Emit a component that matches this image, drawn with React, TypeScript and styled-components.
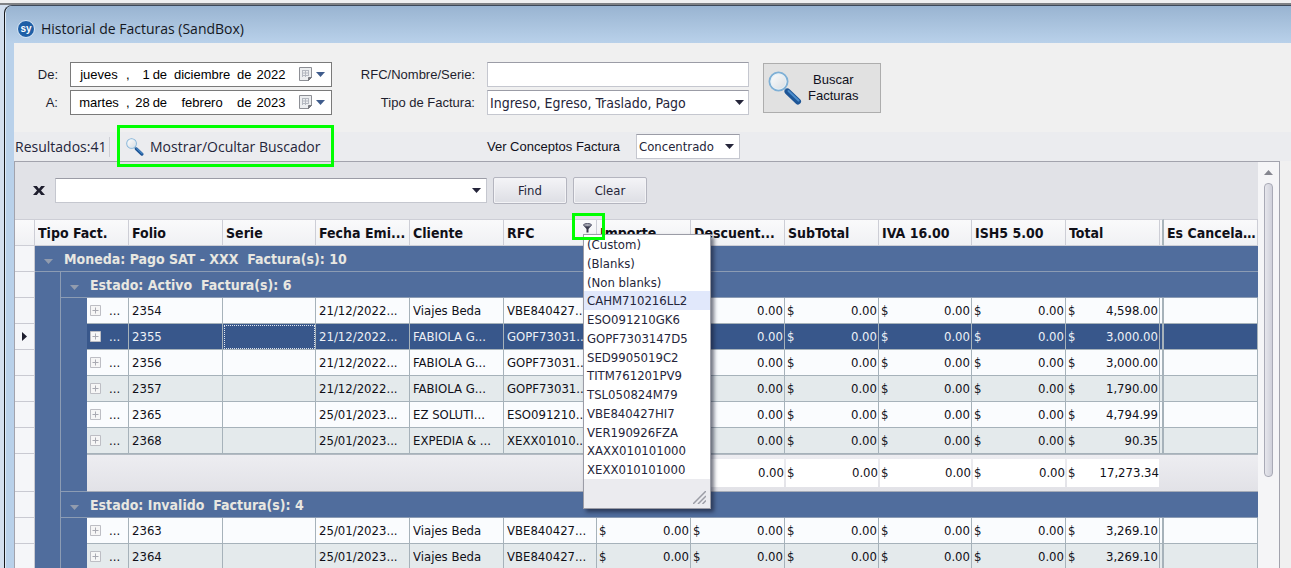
import React from "react";
import styled, { createGlobalStyle, css } from "styled-components";

const tahoma = `"DejaVu Sans Condensed", "DejaVu Sans", Tahoma, sans-serif`;
const segoe = `"Open Sans", "Noto Sans", sans-serif`;
const sans = `"Liberation Sans", Arial, sans-serif`;

const GlobalStyle = createGlobalStyle`
  *, *::before, *::after { box-sizing: border-box; }
  body { margin: 0; background: #f0f0f0; overflow: hidden; }
  button, input, select { font: inherit; color: inherit; margin: 0; }
`;

const Desktop = styled.div`
  height: 100vh;
  overflow: hidden;
  display: flex;
  flex-direction: column;
  padding-left: 4px;
  background: #d3dfee;
  color: #1e1e2e;
  font-family: ${tahoma};
  font-size: 13px;
  line-height: 16px;
`;

const TopEdge = styled.div`
  flex: none;
  height: 5px;
  margin-left: -4px;
  background: #f0f0f0;
  border-bottom: 2px solid #7f8184;
`;

const Window = styled.main`
  flex: 1;
  min-height: 0;
  display: flex;
  flex-direction: column;
  padding-left: 9px;
  border-left: 1px solid #16181c;
  border-top: 1px solid #3c4858;
  border-top-left-radius: 8px;
  background: #b9d1ea;
  box-shadow: inset 1px 0 0 #dfeaf6;
`;

const TitleBar = styled.header`
  flex: none;
  display: flex;
  align-items: center;
  gap: 6px;
  height: 37px;
  margin-left: -8px;
  padding: 8px 0 0 11px;
  border-top-left-radius: 6px;
  background: linear-gradient(#99b4d1, #b9d1ea);
`;

const Title = styled.h1`
  margin: 0;
  font: 400 14px/20px ${segoe};
  color: #14181f;
`;

const Form = styled.form`
  flex: none;
  display: flex;
  align-items: flex-start;
  height: 89px;
  padding: 19px 0 0 14px;
  background: #f0f0f0;
  font-family: ${sans};
`;

const Fields = styled.div<{ $label: number }>`
  display: grid;
  grid-template-columns: ${(p) => p.$label}px 262px;
  grid-auto-rows: 25px;
  gap: 3px 12px;
  align-items: center;
  margin-right: 13px;
`;

const FieldLabel = styled.label`
  text-align: right;
`;

const DateBox = styled.div`
  display: flex;
  align-items: center;
  height: 25px;
  padding: 0 6px 0 4px;
  border: 1px solid #7a7a7a;
  background: #fff;
  color: #000;
`;

const DatePart = styled.input<{ $w: number; $align?: string }>`
  width: ${(p) => p.$w}px;
  padding: 0;
  border: 0;
  outline: 0;
  background: none;
  text-align: ${(p) => p.$align ?? "center"};
`;

const DateWord = styled.span`
  padding: 0 3px;
`;

const PlainButton = styled.button`
  display: flex;
  align-items: center;
  gap: 3px;
  margin-left: auto;
  padding: 0;
  border: 0;
  background: none;
`;

const boxed = css`
  border: 1px solid #c5c7cf;
  border-top-color: #9b9ca6;
  border-radius: 0;
  background: #fff;
  outline: 0;
`;

const TextBox = styled.input`
  ${boxed}
  width: 100%;
  height: 25px;
  padding: 0 4px;
`;

const SelectWrap = styled.span<{ $w?: number; $right: number; $large?: boolean }>`
  position: relative;
  display: block;
  flex: none;
  width: ${(p) => (p.$w ? `${p.$w}px` : "100%")};
  font-family: ${tahoma};
  font-size: ${(p) => (p.$large ? 14 : 13)}px;

  svg {
    position: absolute;
    top: 10px;
    right: ${(p) => p.$right}px;
    pointer-events: none;
  }
`;

const Select = styled.select`
  ${boxed}
  appearance: none;
  width: 100%;
  height: 25px;
  padding: 0 2px;
  color: #25253a;
`;

const SearchButton = styled.button`
  display: flex;
  align-items: center;
  gap: 6px;
  width: 118px;
  height: 50px;
  margin: 1px 0 0 1px;
  padding: 0 4px;
  border: 1px solid #adadad;
  background: #e1e1e1;
  color: #101020;
  line-height: 16px;
`;

const Toolbar = styled.div`
  flex: none;
  display: flex;
  align-items: center;
  height: 29px;
  background: #ebecef;
  color: #25253a;
`;

const ToolText = styled.span`
  width: 96px;
  padding-left: 1px;
  border-right: 1px solid #cfd0d6;
  font: 400 14px/20px ${segoe};
`;

const ToggleButton = styled.button`
  position: relative;
  display: flex;
  align-items: center;
  gap: 6px;
  width: 217px;
  height: 29px;
  margin: 0 153px 0 7px;
  padding: 0 0 0 9px;
  border: 0;
  background: none;
  font: 400 14px/20px ${segoe};
`;

const Highlight = styled.span<{ $top: number; $left: number; $w: number; $h: number }>`
  position: absolute;
  z-index: 3;
  top: ${(p) => p.$top}px;
  left: ${(p) => p.$left}px;
  width: ${(p) => p.$w}px;
  height: ${(p) => p.$h}px;
  border: 3px solid #00ff00;
  pointer-events: none;
`;

const ConceptLabel = styled.label`
  width: 149px;
  font-family: ${sans};
  color: #101020;
`;

const GridArea = styled.div`
  flex: 1;
  min-height: 0;
  display: flex;
  padding-right: 11px;
  background: #f0f0f0;
`;

const GridFrame = styled.section`
  flex: 1;
  min-width: 0;
  display: flex;
  border: 1px solid #a2a3ad;
  border-bottom: 0;
  background: #e1e2e7;
`;

const GridMain = styled.div`
  flex: 1;
  min-width: 0;
`;

const FindPanel = styled.div`
  display: flex;
  align-items: center;
  gap: 6px;
  height: 57px;
  padding-left: 18px;
  color: #25253a;
`;

const CloseButton = styled.button`
  display: flex;
  width: 16px;
  padding: 0;
  border: 0;
  background: none;
`;

const FlatButton = styled.button`
  width: 74px;
  height: 27px;
  padding: 0;
  border: 1px solid #b4b5bf;
  border-radius: 2px;
  background: linear-gradient(#f4f4f7, #dddee4);
  box-shadow: inset 0 0 0 1px #f3f3f6;
`;

const Table = styled.table`
  width: 100%;
  table-layout: fixed;
  border-collapse: separate;
  border-spacing: 0;
  color: #101018;
`;

const HeadCell = styled.th`
  position: relative;
  height: 27px;
  padding: 0 0 0 3px;
  border: solid #cdced6;
  border-width: 1px 1px 1px 0;
  background: linear-gradient(#fafafb, #f0f1f4);
  text-align: left;
  font-size: 14px;
  font-weight: 700;
`;

const SplitHead = styled(HeadCell)`
  padding: 0;
  border-right: 2px solid #a9b5bb;
`;

const Clip = styled.span`
  display: block;
  overflow: hidden;
  white-space: nowrap;
  text-overflow: ellipsis;
`;

const FilterButton = styled.button`
  position: absolute;
  top: 3px;
  right: 4px;
  display: flex;
  padding: 0;
  border: 0;
  background: none;
`;

const Indicator = styled.td`
  padding: 0;
  border-right: 1px solid #c9cad2;
  border-bottom: 1px solid #c9cad2;
  background: #f5f6f9;

  svg {
    display: block;
    margin: 0 auto;
  }
`;

const Indent = styled.td<{ $line?: boolean; $end?: boolean }>`
  padding: 0;
  background: #506d9d;
  border-right: ${(p) => (p.$line ? "1px solid #8c9cb4" : "0")};
  border-bottom: ${(p) => (p.$end ? "1px solid #8c9cb4" : "0")};
`;

const GroupCell = styled.td`
  height: 26px;
  padding: 0 0 0 9px;
  border-bottom: 1px solid #8c9cb4;
  background: #506d9d;
  color: #e8e7e1;
  font-size: 14px;
  font-weight: 700;
  white-space: pre;

  svg {
    margin-right: 11px;
  }
`;

const Row = styled.tr<{ $tone: "plain" | "alt" | "active" }>`
  --cell: ${(p) => ({ plain: "#fafcfe", alt: "#e4eaec", active: "#38578b" })[p.$tone]};
  color: ${(p) => (p.$tone === "active" ? "#eef1f6" : "inherit")};
`;

const Cell = styled.td<{ $focus?: boolean }>`
  height: 26px;
  padding: 0 0 0 3px;
  border-right: 1px solid #a6b2ba;
  border-bottom: 1px solid #a6b2ba;
  background: var(--cell);
  ${(p) => p.$focus && "outline: 1px dotted #dfe5ee; outline-offset: -2px;"}
`;

const ExpandCell = styled(Cell)`
  div {
    display: flex;
    align-items: center;
    gap: 8px;
  }
`;

const SplitCell = styled(Cell)`
  padding: 0;
  border-right: 2px solid #a6b2ba;
`;

const MoneyCell = styled(Cell)`
  padding: 0 1px 0 2px;
`;

const Money = styled.div`
  display: flex;
  justify-content: space-between;
`;

const ExpandButton = styled.button`
  display: flex;
  padding: 0;
  border: 0;
  background: none;
`;

const FooterCell = styled.td`
  height: 37px;
  padding: 4px 1px 4px 1px;
  border-top: 1px solid #b3bac2;
  border-bottom: 1px solid #a6acb8;
  background: linear-gradient(#ededf1, #e2e2e7);

  ${Money} {
    align-items: center;
    height: 28px;
    padding-left: 1px;
    background: #fff;
  }
`;

const Popup = styled.div`
  position: absolute;
  z-index: 2;
  top: 14px;
  left: 79px;
  width: 128px;
  border: 1px solid #9b9ca6;
  background: #fff;
  box-shadow: 3px 3px 4px rgba(20, 25, 45, 0.6);
  color: #25253a;
  font-size: 13px;
  font-weight: 400;
`;

const PopupList = styled.ul`
  display: grid;
  grid-template-rows: repeat(13, 1fr);
  height: 244px;
  margin: 0;
  padding: 0;
  list-style: none;
`;

const PopupItem = styled.li<{ $on: boolean }>`
  padding: 2px 0 0 3px;
  background: ${(p) => (p.$on ? "#e1e8fb" : "none")};
`;

const PopupFoot = styled.div`
  display: flex;
  align-items: flex-end;
  justify-content: flex-end;
  height: 29px;
  padding: 4px;
  background: #ebebef;
`;

const ScrollTrack = styled.div`
  flex: none;
  display: flex;
  flex-direction: column;
  align-items: center;
  gap: 8px;
  width: 21px;
  padding-top: 8px;
  background: #f5f5f7;
`;

const ScrollThumb = styled.div`
  width: 9px;
  height: 294px;
  border: 1px solid #a9aab6;
  border-radius: 4px;
  background: linear-gradient(90deg, #e6e6ec, #cfd0da);
`;

const Caret = ({ color = "#25253a", w = 9, h = 5 }: { color?: string; w?: number; h?: number }) => (
  <svg width={w} height={h} viewBox="0 0 9 5" aria-hidden="true">
    <path d="M0 0h9L4.500 5z" fill={color} />
  </svg>
);

const Magnifier = ({ size, id }: { size: number; id: string }) => (
  <svg width={size} height={size} viewBox="0 0 34 34" aria-hidden="true">
    <defs>
      <linearGradient id={id} x1="0" y1="0" x2="1" y2="1">
        <stop offset="0" stopColor="#ffffff" />
        <stop offset="1" stopColor="#d6dbe0" />
      </linearGradient>
    </defs>
    <path d="M16 17l4 4" stroke="#9bb6cf" strokeWidth="3" />
    <path d="M19.500 20.500L30 30.500" stroke="#1d5596" strokeWidth="6" strokeLinecap="round" />
    <path d="M20.500 20L30.500 29.500" stroke="#4b8ccb" strokeWidth="2" strokeLinecap="round" />
    <circle cx="10.500" cy="10.500" r="9" fill={`url(#${id})`} stroke="#7fb0d6" strokeWidth="2" />
    <circle cx="10.500" cy="10.500" r="7.600" fill="none" stroke="#e3f0f8" strokeWidth="1" />
  </svg>
);

const Logo = () => (
  <svg width="18" height="18" viewBox="0 0 18 18" aria-hidden="true">
    <circle cx="9" cy="9" r="8.500" fill="#1f5fa6" stroke="#dbe9f7" />
    <text x="9" y="12" textAnchor="middle" fontFamily="Liberation Sans, sans-serif" fontSize="10" fontWeight="700" fill="#fff">
      sy
    </text>
  </svg>
);

const CalendarIcon = () => (
  <svg width="14" height="15" viewBox="0 0 14 15" aria-hidden="true">
    <path d="M.5.500h12v10l-3 3H.500z" fill="#eceef0" stroke="#8d8f95" />
    <path d="M3 3.500h7M3 6h7M3 8.500h7M3.500 3v7M6.500 3v7M9.500 3v6" stroke="#b4b8c0" />
    <path d="M12.500 10.500h-3v3z" fill="#77797f" stroke="#77797f" />
  </svg>
);

const Plus = () => (
  <svg width="11" height="11" viewBox="0 0 11 11" aria-hidden="true">
    <path d="M.5.500h10v10H.500z" fill="#f6f6f6" stroke="#bdbec4" />
    <path d="M2.500 5.500h6M5.500 2.500v6" stroke="#a9aab2" />
  </svg>
);

const DateField = ({ id, parts }: { id: string; parts: string[] }) => (
  <DateBox>
    <DatePart id={id} $w={48} defaultValue={parts[0]} />
    <DateWord>,</DateWord>
    <DatePart $w={17} $align="right" aria-label="Día" defaultValue={parts[1]} />
    <DateWord>de</DateWord>
    <DatePart $w={64} aria-label="Mes" defaultValue={parts[2]} />
    <DateWord>de</DateWord>
    <DatePart $w={33} aria-label="Año" defaultValue={parts[3]} />
    <PlainButton type="button" aria-label="Abrir calendario">
      <CalendarIcon />
      <Caret color="#3f5c8c" />
    </PlainButton>
  </DateBox>
);

const columnWidths = [20, 26, 26, 42, 94, 93, 94, 94, 93, 94, 94, 94, 93, 94, 94, 4];

const filterValues = [
  "(Custom)", "(Blanks)", "(Non blanks)", "CAHM710216LL2", "ESO091210GK6", "GOPF7303147D5", "SED9905019C2",
  "TITM761201PV9", "TSL050824M79", "VBE840427HI7", "VER190926FZA", "XAXX010101000", "XEXX010101000",
];

type Invoice = [folio: string, date: string, client: string, rfc: string, total: string];

const active: Invoice[] = [
  ["2354", "21/12/2022...", "Viajes Beda", "VBE840427...", "4,598.00"],
  ["2355", "21/12/2022...", "FABIOLA G...", "GOPF73031...", "3,000.00"],
  ["2356", "21/12/2022...", "FABIOLA G...", "GOPF73031...", "3,000.00"],
  ["2357", "21/12/2022...", "FABIOLA G...", "GOPF73031...", "1,790.00"],
  ["2365", "25/01/2023...", "EZ SOLUTI...", "ESO091210...", "4,794.99"],
  ["2368", "25/01/2023...", "EXPEDIA & ...", "XEXX01010...", "90.35"],
];

const invalid: Invoice[] = [
  ["2363", "25/01/2023...", "Viajes Beda", "VBE840427...", "3,269.10"],
  ["2364", "25/01/2023...", "Viajes Beda", "VBE840427...", "3,269.10"],
];

const zeros = ["0.00", "0.00", "0.00", "0.00", "0.00"];

const Amount = ({ value }: { value: string }) => (
  <Money>
    <span>$</span>
    <span>{value}</span>
  </Money>
);

const InvoiceRow = ({ data, index, selected }: { data: Invoice; index: number; selected?: boolean }) => {
  const [folio, date, client, rfc, total] = data;
  return (
    <Row $tone={selected ? "active" : index % 2 ? "alt" : "plain"}>
      <Indicator>
        {selected && (
          <svg width="5" height="9" viewBox="0 0 5 9" aria-hidden="true">
            <path d="M0 0l5 4.500L0 9z" fill="#1e1e2e" />
          </svg>
        )}
      </Indicator>
      <Indent $line />
      <Indent />
      <ExpandCell>
        <div>
          <ExpandButton type="button" aria-label={`Expandir ${folio}`}>
            <Plus />
          </ExpandButton>
          <span>...</span>
        </div>
      </ExpandCell>
      <Cell><Clip>{folio}</Clip></Cell>
      <Cell $focus={selected} />
      <Cell><Clip>{date}</Clip></Cell>
      <Cell><Clip>{client}</Clip></Cell>
      <Cell><Clip>{rfc}</Clip></Cell>
      {[...zeros, total].map((value, i) => (
        <MoneyCell key={i}><Amount value={value} /></MoneyCell>
      ))}
      <SplitCell />
      <Cell />
    </Row>
  );
};

const StateGroup = ({ title }: { title: string }) => (
  <tr>
    <Indicator />
    <Indent $line />
    <GroupCell colSpan={15}>
      <Caret color="#929cae" />
      {title}
    </GroupCell>
  </tr>
);

export default function App() {
  return (
    <Desktop>
      <GlobalStyle />
      <TopEdge />
      <Window>
        <TitleBar>
          <Logo />
          <Title>Historial de Facturas (SandBox)</Title>
        </TitleBar>

        <Form onSubmit={(e) => e.preventDefault()}>
          <Fields $label={30}>
            <FieldLabel htmlFor="from">De:</FieldLabel>
            <DateField id="from" parts={["jueves", "1", "diciembre", "2022"]} />
            <FieldLabel htmlFor="to">A:</FieldLabel>
            <DateField id="to" parts={["martes", "28", "febrero", "2023"]} />
          </Fields>
          <Fields $label={130}>
            <FieldLabel htmlFor="query">RFC/Nombre/Serie:</FieldLabel>
            <TextBox id="query" />
            <FieldLabel htmlFor="kind">Tipo de Factura:</FieldLabel>
            <SelectWrap $right={5} $large>
              <Select id="kind">
                <option>Ingreso, Egreso, Traslado, Pago</option>
              </Select>
              <Caret />
            </SelectWrap>
          </Fields>
          <SearchButton type="submit">
            <Magnifier size={34} id="lens-large" />
            <span>Buscar<br />Facturas</span>
          </SearchButton>
        </Form>

        <Toolbar>
          <ToolText>Resultados:41</ToolText>
          <ToggleButton type="button">
            <Magnifier size={18} id="lens-small" />
            Mostrar/Ocultar Buscador
            <Highlight $top={-7} $left={0} $w={217} $h={42} />
          </ToggleButton>
          <ConceptLabel htmlFor="concepts">Ver Conceptos Factura</ConceptLabel>
          <SelectWrap $w={104} $right={6}>
            <Select id="concepts">
              <option>Concentrado</option>
            </Select>
            <Caret />
          </SelectWrap>
        </Toolbar>

        <GridArea>
          <GridFrame>
            <GridMain>
              <FindPanel>
                <CloseButton type="button" aria-label="Cerrar buscador">
                  <svg width="12" height="9" viewBox="0 0 12 9" aria-hidden="true">
                    <path d="M0 0h3.800l2.200 2.700L8.200 0H12L8 4.500 12 9H8.200L6 6.300 3.800 9H0l4-4.500z" fill="#1e1e2e" />
                  </svg>
                </CloseButton>
                <SelectWrap $w={432} $right={6}>
                  <TextBox aria-label="Buscar en la lista" />
                  <Caret />
                </SelectWrap>
                <FlatButton type="button">Find</FlatButton>
                <FlatButton type="button">Clear</FlatButton>
              </FindPanel>

              <Table>
                <colgroup>
                  {columnWidths.map((w, i) => (
                    <col key={i} style={{ width: w }} />
                  ))}
                  <col />
                </colgroup>
                <thead>
                  <tr>
                    <HeadCell />
                    <HeadCell colSpan={3}><Clip>Tipo Fact.</Clip></HeadCell>
                    <HeadCell><Clip>Folio</Clip></HeadCell>
                    <HeadCell><Clip>Serie</Clip></HeadCell>
                    <HeadCell><Clip>Fecha Emi...</Clip></HeadCell>
                    <HeadCell><Clip>Cliente</Clip></HeadCell>
                    <HeadCell>
                      <Clip>RFC</Clip>
                      <FilterButton type="button" aria-label="Filtrar RFC">
                        <svg width="9" height="10" viewBox="0 0 9 10" aria-hidden="true">
                          <path d="M.5 2.500L3.500 6v3.500h2V6l3-3.500z" fill="#3a3a4c" />
                          <ellipse cx="4.500" cy="2" rx="4" ry="1.500" fill="#a9aab4" stroke="#55566a" />
                        </svg>
                      </FilterButton>
                      <Highlight $top={-7} $left={68} $w={33} $h={27} />
                      <Popup>
                        <PopupList>
                          {filterValues.map((value, i) => (
                            <PopupItem key={value} $on={i === 3}>{value}</PopupItem>
                          ))}
                        </PopupList>
                        <PopupFoot>
                          <svg width="13" height="13" viewBox="0 0 13 13" aria-hidden="true">
                            <path d="M0 13L13 0M5 13l8-8M9.500 13l3.500-3.500" stroke="#9c9da6" strokeWidth="1.500" />
                          </svg>
                        </PopupFoot>
                      </Popup>
                    </HeadCell>
                    <HeadCell><Clip>Importe</Clip></HeadCell>
                    <HeadCell><Clip>Descuent...</Clip></HeadCell>
                    <HeadCell><Clip>SubTotal</Clip></HeadCell>
                    <HeadCell><Clip>IVA 16.00</Clip></HeadCell>
                    <HeadCell><Clip>ISH5 5.00</Clip></HeadCell>
                    <HeadCell><Clip>Total</Clip></HeadCell>
                    <SplitHead />
                    <HeadCell><Clip>Es Cancela...</Clip></HeadCell>
                  </tr>
                </thead>
                <tbody>
                  <tr>
                    <Indicator />
                    <GroupCell colSpan={16}>
                      <Caret color="#929cae" />
                      {"Moneda: Pago SAT - XXX  Factura(s): 10"}
                    </GroupCell>
                  </tr>
                  <StateGroup title="Estado: Activo  Factura(s): 6" />
                  {active.map((row, i) => (
                    <InvoiceRow key={row[0]} data={row} index={i} selected={i === 1} />
                  ))}
                  <tr>
                    <Indicator />
                    <Indent $line />
                    <Indent $end />
                    <FooterCell colSpan={6} />
                    {[...zeros, "17,273.34"].map((value, i) => (
                      <FooterCell key={i}><Amount value={value} /></FooterCell>
                    ))}
                    <FooterCell colSpan={2} />
                  </tr>
                  <StateGroup title="Estado: Invalido  Factura(s): 4" />
                  {invalid.map((row, i) => (
                    <InvoiceRow key={row[0]} data={row} index={i} />
                  ))}
                </tbody>
              </Table>
            </GridMain>
            <ScrollTrack>
              <svg width="9" height="5" viewBox="0 0 9 5" aria-hidden="true">
                <path d="M0 5h9L4.500 0z" fill="#85868f" />
              </svg>
              <ScrollThumb />
            </ScrollTrack>
          </GridFrame>
        </GridArea>
      </Window>
    </Desktop>
  );
}
